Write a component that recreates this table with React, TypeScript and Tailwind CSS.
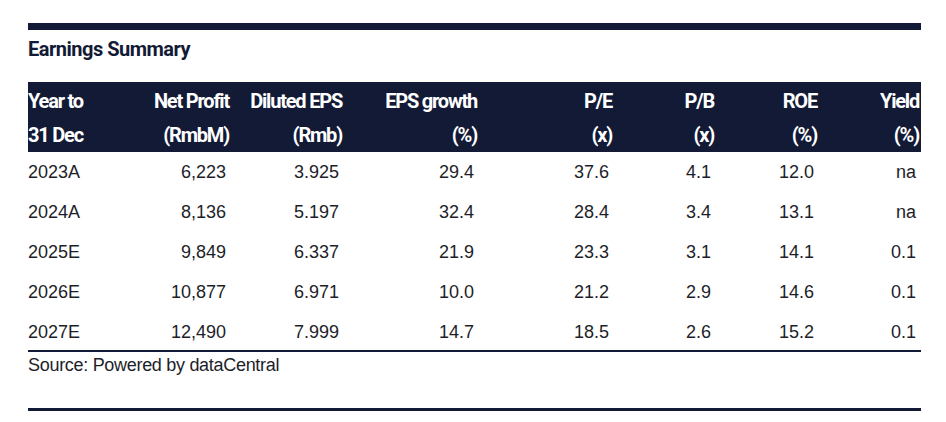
const navy = 'bg-[#131a36]'

const rows = [
  ['2023A', '6,223', '3.925', '29.4', '37.6', '4.1', '12.0', 'na'],
  ['2024A', '8,136', '5.197', '32.4', '28.4', '3.4', '13.1', 'na'],
  ['2025E', '9,849', '6.337', '21.9', '23.3', '3.1', '14.1', '0.1'],
  ['2026E', '10,877', '6.971', '10.0', '21.2', '2.9', '14.6', '0.1'],
  ['2027E', '12,490', '7.999', '14.7', '18.5', '2.6', '15.2', '0.1'],
]

const head1 = ['Year to', 'Net Profit', 'Diluted EPS', 'EPS growth', 'P/E', 'P/B', 'ROE', 'Yield']
const head2 = ['31 Dec', '(RmbM)', '(Rmb)', '(%)', '(x)', '(x)', '(%)', '(%)']

// column widths measured from the right edges of each column
const cols = 'grid grid-cols-[100px_101px_113px_135px_135px_102px_103px_104px]'

function HeadLine({ cells }: { cells: string[] }) {
  return (
    <div className={`${cols} h-[34px] items-center leading-[34px]`}>
      {cells.map((c, i) => (
        <div key={i} className={i === 0 ? 'text-left' : i === 7 ? 'pr-[2px] text-right' : 'text-right'}>
          {c}
        </div>
      ))}
    </div>
  )
}

export default function App() {
  return (
    <div className="h-[422px] w-[946px] bg-white pl-[28px] pt-[23px]">
      <div className="w-[893px]">
        <div className={`h-[7px] ${navy}`} />

        <h2 className="mt-[7px] h-[24px] font-['Roboto',sans-serif] text-[20px] leading-[24px] font-bold tracking-[-0.5px] text-[#131a36]">
          Earnings Summary
        </h2>

        <div
          className={`mt-[21px] ${navy} pt-[2px] font-['Roboto',sans-serif] text-[20px] font-bold tracking-[-1.2px] text-white`}
        >
          <HeadLine cells={head1} />
          <HeadLine cells={head2} />
        </div>

        <div className="font-['Liberation_Sans',Arial,sans-serif] text-[18px] text-[#1d1e29]">
          {rows.map((r, ri) => (
            <div
              key={r[0]}
              className={`${cols} h-[40px] items-center leading-[40px] ${ri === rows.length - 1 ? 'border-b-2 border-[#131a36] leading-[38px]' : ''}`}
            >
              {r.map((c, i) => (
                <div key={i} className={i === 0 ? 'text-left' : i === 7 ? 'pr-[5px] text-right' : 'pr-[3px] text-right'}>
                  {c}
                </div>
              ))}
            </div>
          ))}
          <div className="mt-[1px] h-[24px] leading-[24px] tracking-[-0.3px]">Source: Powered by dataCentral</div>
        </div>

        <div className={`mt-[31px] h-[3px] ${navy}`} />
      </div>
    </div>
  )
}
